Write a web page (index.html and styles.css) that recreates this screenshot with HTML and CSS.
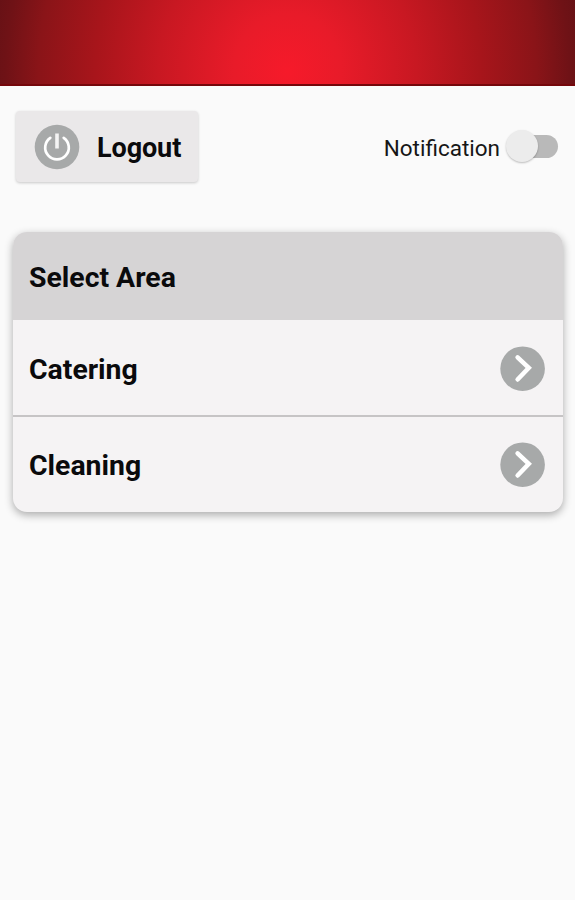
FILE: index.html
```html
<!DOCTYPE html>
<html lang="en">
<head>
    <meta charset="UTF-8">
    <meta name="viewport" content="width=device-width, initial-scale=1.0">
    <title>Select Area</title>
    <link rel="stylesheet" href="styles.css">
</head>
<body>
    <header></header>

    <section class="toolbar">
        <button class="logout">
            <svg class="icon" viewBox="0 0 46 46" aria-hidden="true">
                <circle cx="23" cy="23" r="22.3" fill="#a7a9a9"/>
                <path d="M16.3 13.8A11.8 11.8 0 1 0 29.7 13.8" fill="none" stroke="#fff" stroke-width="2.7" stroke-linecap="round"/>
                <path d="M23 9.5V24.5" stroke="#f4f4f4" stroke-width="3.6"/>
            </svg>
            <span>Logout</span>
        </button>
        <label class="notification">
            <span>Notification</span>
            <input type="checkbox">
            <span class="switch"></span>
        </label>
    </section>

    <section class="card">
        <h2>Select Area</h2>
        <ul>
            <li>
                <a href="#catering">
                    <span>Catering</span>
                    <svg class="icon" viewBox="0 0 46 46" aria-hidden="true">
                        <circle cx="22.6" cy="22.7" r="22.3" fill="#a7a9a9"/>
                        <path d="M17.6 11.3L28.8 21.9L17.6 33.5" fill="none" stroke="#fff" stroke-width="4.5" stroke-linecap="round"/>
                    </svg>
                </a>
            </li>
            <li>
                <a href="#cleaning">
                    <span>Cleaning</span>
                    <svg class="icon" viewBox="0 0 46 46" aria-hidden="true">
                        <circle cx="22.6" cy="22.7" r="22.3" fill="#a7a9a9"/>
                        <path d="M17.6 11.3L28.8 21.9L17.6 33.5" fill="none" stroke="#fff" stroke-width="4.5" stroke-linecap="round"/>
                    </svg>
                </a>
            </li>
        </ul>
    </section>
</body>
</html>
```
FILE: styles.css
```css
/* Global Styles */
* {
    margin: 0;
    padding: 0;
    box-sizing: border-box;
    font-family: Roboto, Arial, sans-serif;
}

body {
    background-color: #fafafa;
    min-height: 100vh;
    color: #0a0a0c;
}

header {
    height: 86px;
    background: radial-gradient(ellipse 300px 320px at 50% 85%, #f61a2a 0%, #e81b29 18%, #c81822 43%, #a8151b 64%, #8a1418 83%, #6f1216 94%, #651115 100%);
    border-bottom: 2px solid #75070b;
}

.icon {
    width: 46px;
    height: 46px;
    flex-shrink: 0;
}

/* Toolbar */
.toolbar {
    display: flex;
    align-items: center;
    justify-content: space-between;
    height: 71px;
    margin: 25px 17px 0 16px;
}

.logout {
    display: flex;
    align-items: center;
    gap: 17px;
    width: 182px;
    height: 71px;
    padding-left: 18px;
    border: none;
    border-radius: 4px;
    background-color: #eae8e9;
    box-shadow: 0 1px 3px rgba(0, 0, 0, 0.2);
    color: #0a0a0c;
    font-size: 27px;
    font-weight: bold;
    letter-spacing: -0.1px;
    cursor: pointer;
}

.logout span {
    padding-top: 3px;
}

.notification {
    display: flex;
    align-items: center;
    font-size: 22.5px;
    color: #161616;
    cursor: pointer;
}

.notification span:first-child {
    padding-top: 2px;
}

.notification input {
    display: none;
}

.switch {
    position: relative;
    width: 42px;
    height: 23px;
    margin-left: 16px;
    border-radius: 12px;
    background-color: #b9b9b9;
}

.switch::before {
    content: "";
    position: absolute;
    top: -5px;
    left: -10px;
    width: 32px;
    height: 32px;
    border-radius: 50%;
    background-color: #ececec;
    box-shadow: 0 1px 2px rgba(0, 0, 0, 0.25);
}

/* Card */
.card {
    margin: 50px 12px 0 13px;
    border-radius: 14px;
    background-color: #f5f3f4;
    box-shadow: 0 3px 8px rgba(0, 0, 0, 0.32);
    overflow: hidden;
}

.card h2 {
    height: 88px;
    padding-left: 16px;
    background-color: #d6d4d5;
    font-size: 28.4px;
    line-height: 91px;
}

.card ul {
    list-style: none;
}

.card li + li {
    border-top: 2px solid #c6c4c5;
}

.card a {
    display: flex;
    align-items: center;
    justify-content: space-between;
    height: 95px;
    padding: 2px 17px 0 16px;
    color: inherit;
    font-size: 28.4px;
    font-weight: bold;
    text-decoration: none;
}

.card li + li a {
    padding-top: 0;
}

.card a span {
    padding-top: 2px;
}
```
